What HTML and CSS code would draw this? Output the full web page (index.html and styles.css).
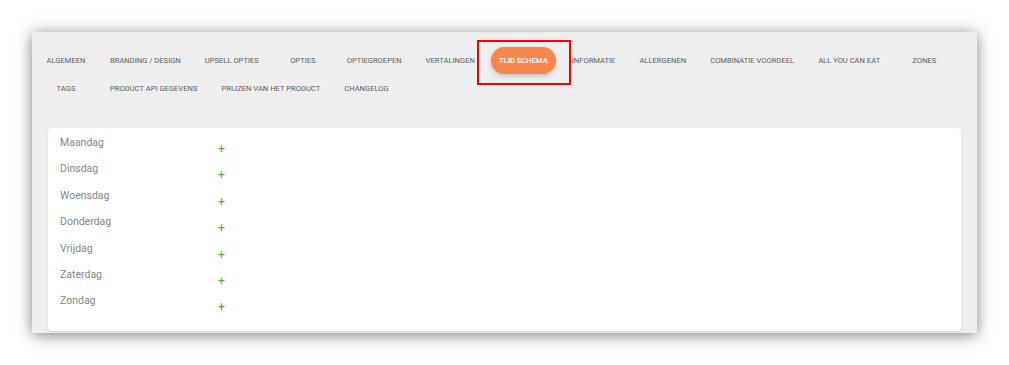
FILE: index.html
```html
<!doctype html>
<html lang="nl">
  <head>
    <meta charset="utf-8">
    <title>Tijd schema</title>
    <link rel="stylesheet" href="styles.css">
  </head>
  <body>
    <div class="panel">
      <nav class="tabs">
        <div class="tab">Algemeen</div>
        <div class="tab">Branding / Design</div>
        <div class="tab">Upsell opties</div>
        <div class="tab">Opties</div>
        <div class="tab">Optiegroepen</div>
        <div class="tab">Vertalingen</div>
        <div class="tab active"><span class="pill">Tijd schema</span></div>
        <div class="tab">Informatie</div>
        <div class="tab">Allergenen</div>
        <div class="tab">Combinatie voordeel</div>
        <div class="tab">All you can eat</div>
        <div class="tab">Zones</div>
        <div class="tab">Tags</div>
        <div class="tab">Product API gegevens</div>
        <div class="tab">Prijzen van het product</div>
        <div class="tab">Changelog</div>
      </nav>

      <div class="card">
        <div class="day"><span class="day-name">Maandag</span><span class="add">+</span></div>
        <div class="day"><span class="day-name">Dinsdag</span><span class="add">+</span></div>
        <div class="day"><span class="day-name">Woensdag</span><span class="add">+</span></div>
        <div class="day"><span class="day-name">Donderdag</span><span class="add">+</span></div>
        <div class="day"><span class="day-name">Vrijdag</span><span class="add">+</span></div>
        <div class="day"><span class="day-name">Zaterdag</span><span class="add">+</span></div>
        <div class="day"><span class="day-name">Zondag</span><span class="add">+</span></div>
      </div>
    </div>

    <!-- annotation box around the active tab -->
    <div class="highlight"></div>
  </body>
</html>
```

FILE: styles.css
```css
* {
  margin: 0;
  padding: 0;
  box-sizing: border-box;
}

body {
  background: #fff;
  font-family: Roboto, 'Liberation Sans', sans-serif;
  padding: 32px;
  position: relative;
}

.panel {
  width: 945px;
  height: 301px;
  background: #eeeeee;
  box-shadow: 0 2px 14px rgba(0, 0, 0, 0.5);
  padding-top: 14px;
}

.tabs {
  display: flex;
  flex-wrap: wrap;
  width: 932px;
  padding-left: 2px;
}

.tab {
  min-width: 64px;
  height: 28px;
  padding: 0 12px;
  display: flex;
  align-items: center;
  justify-content: center;
  font-size: 7.6px;
  text-transform: uppercase;
  color: #606060;
  white-space: nowrap;
}

.tab.active {
  padding: 0 4px;
}

.pill {
  display: flex;
  align-items: center;
  height: 27px;
  padding: 0 8px;
  border-radius: 14px;
  background: #f7874a;
  color: #fff;
  font-weight: 500;
  box-shadow: 0 2px 4px rgba(0, 0, 0, 0.2);
}

.card {
  margin: 26px 16px 0 16px;
  height: 203px;
  background: #fff;
  border-radius: 4px;
  box-shadow: 0 1px 2px rgba(0, 0, 0, 0.12);
  padding: 8px 0 0 12px;
  display: grid;
  grid-auto-rows: 26.4px;
}

.day {
  display: flex;
  align-items: flex-start;
}

.day-name {
  width: 158px;
  font-size: 10.5px;
  line-height: 13px;
  color: #858585;
}

.add {
  margin-top: 7px;
  font-size: 12px;
  line-height: 13px;
  color: #4caf50;
}

.highlight {
  position: absolute;
  left: 477px;
  top: 40px;
  width: 94px;
  height: 45px;
  border: 2px solid #f00;
}
```
